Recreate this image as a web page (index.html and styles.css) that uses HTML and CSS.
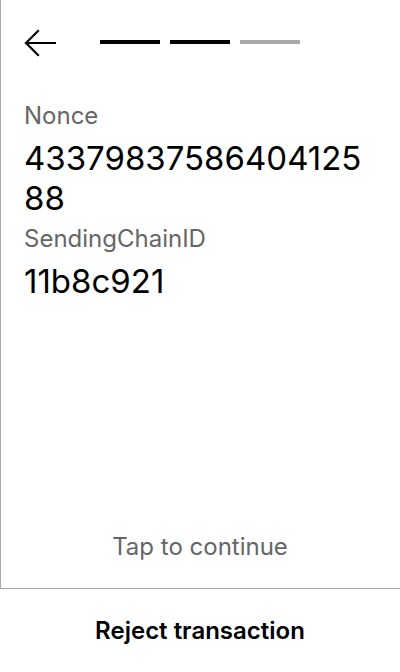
FILE: index.html
```html
<!DOCTYPE html>
<html lang="en">
<head>
<meta charset="utf-8">
<title>Confirm transaction</title>
<link rel="stylesheet" href="styles.css">
</head>
<body>
<div class="screen">
  <header class="header">
    <button class="back" aria-label="Back">
      <svg width="32" height="28" viewBox="0 0 32 28" fill="none" stroke="#000" stroke-width="2.2" stroke-linecap="square">
        <path d="M31 14H2M14 2L2 14L14 26"/>
      </svg>
    </button>
    <div class="steps">
      <span class="step done"></span>
      <span class="step done"></span>
      <span class="step"></span>
    </div>
  </header>
  <main class="content">
    <div class="field">
      <div class="label">Nonce</div>
      <div class="value">4337983758640412588</div>
    </div>
    <div class="field">
      <div class="label">SendingChainID</div>
      <div class="value">11b8c921</div>
    </div>
  </main>
  <div class="tap">Tap to continue</div>
  <button class="reject">Reject transaction</button>
</div>
</body>
</html>
```
FILE: styles.css
```css
* { box-sizing: border-box; }
html, body { margin: 0; padding: 0; }
body {
  width: 400px;
  height: 672px;
  background: #fff;
  font-family: Inter, "Noto Sans", sans-serif;
  color: #000;
  box-shadow: inset 1px 0 0 #ababab;
}
.screen {
  height: 672px;
  display: flex;
  flex-direction: column;
}
.header {
  height: 86px;
  flex: none;
  display: flex;
  align-items: center;
  padding-left: 24px;
}
.back {
  border: 0;
  background: none;
  padding: 0;
  width: 32px;
  height: 28px;
  display: block;
}
.back svg { display: block; }
.steps {
  display: flex;
  gap: 10px;
  margin-left: 44px;
  margin-bottom: 2px;
}
.step {
  width: 60px;
  height: 4px;
  background: #aaaaaa;
}
.step.done { background: #000; }
.content {
  flex: 1;
  padding: 16px 24px 0;
  display: flex;
  flex-direction: column;
  gap: 7px;
}
.field {
  display: flex;
  flex-direction: column;
  gap: 8px;
}
.label {
  font-size: 24px;
  line-height: 28px;
  color: #666;
}
.value {
  font-size: 33px;
  line-height: 40px;
  word-break: break-all;
}
.tap {
  flex: none;
  text-align: center;
  font-size: 24px;
  line-height: 28px;
  color: #666;
  padding-bottom: 27px;
}
.reject {
  flex: none;
  display: block;
  width: 100%;
  border: 0;
  border-top: 1px solid #ababab;
  background: #fff;
  font-family: inherit;
  font-size: 24px;
  line-height: 28px;
  font-weight: 600;
  color: #000;
  padding: 28px 0 27px;
}
```
